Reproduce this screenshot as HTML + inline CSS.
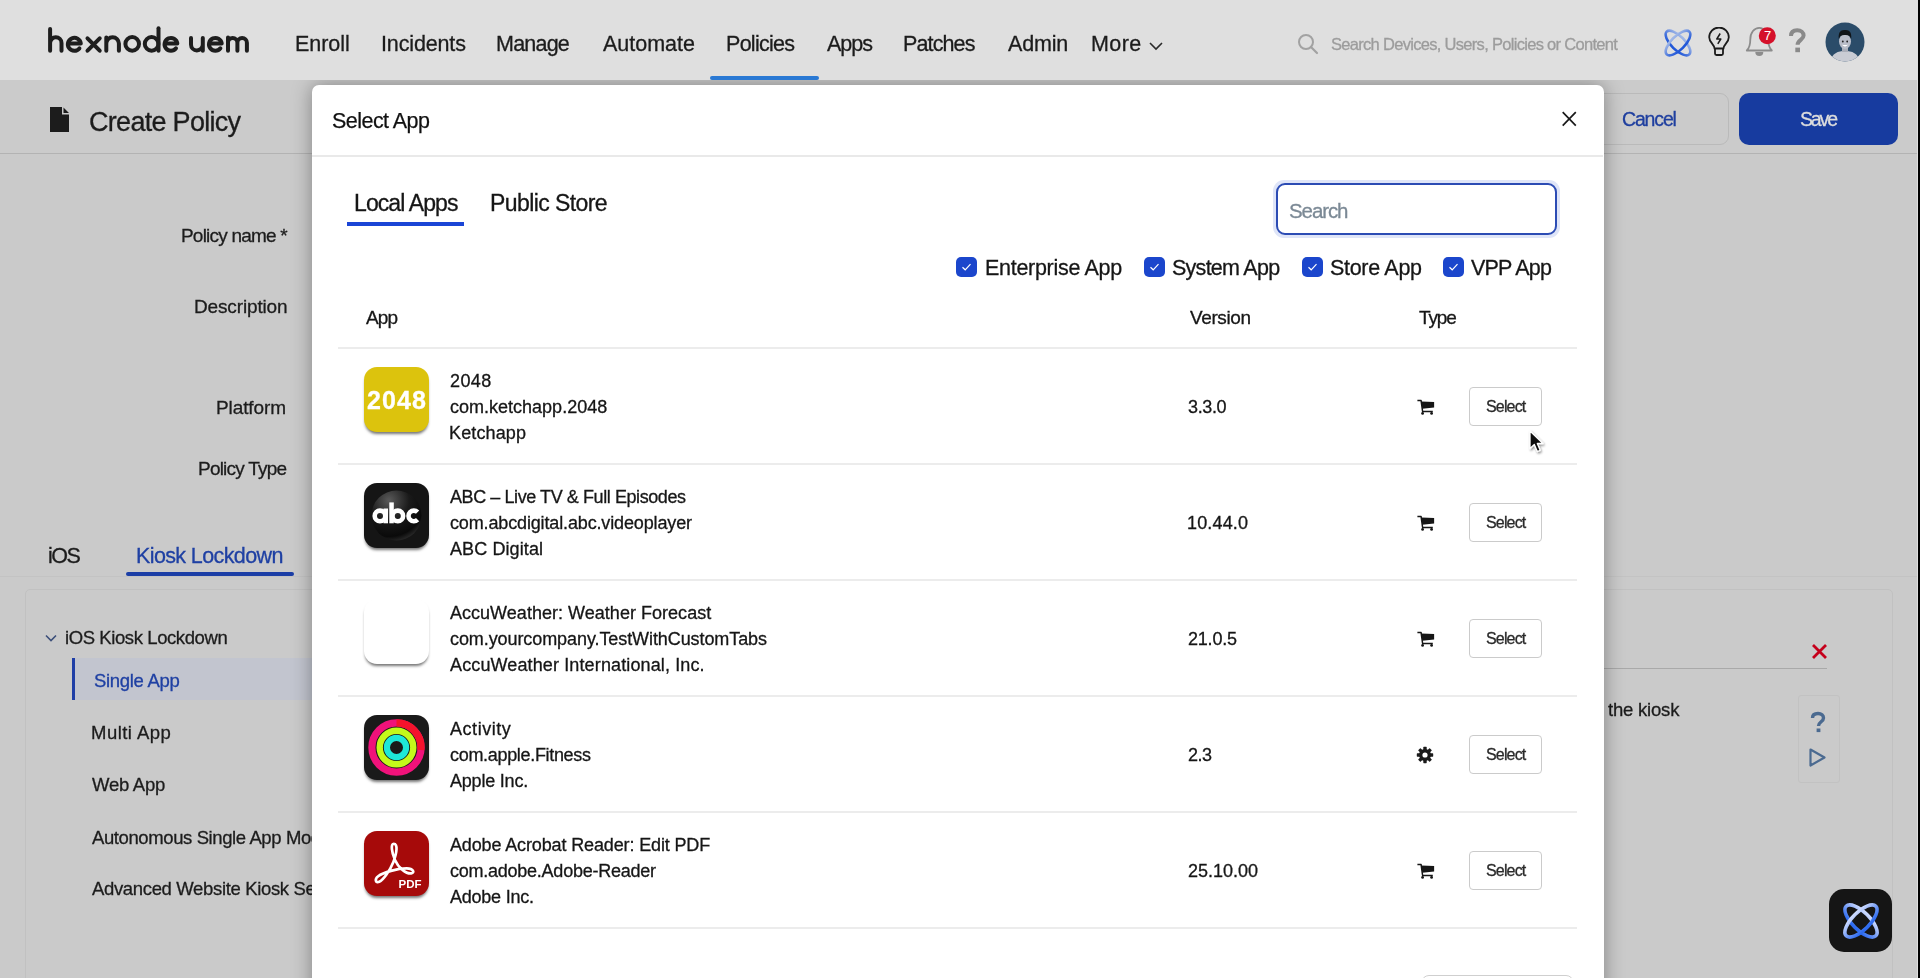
<!DOCTYPE html>
<html><head><meta charset="utf-8"><style>
*{box-sizing:border-box}
html,body{margin:0;padding:0;width:1920px;height:978px;overflow:hidden;background:#cacaca;font-family:"Liberation Sans",sans-serif;color:#1c1c1c}
.a{position:absolute}
.t{position:absolute;white-space:nowrap;line-height:1;will-change:transform;-webkit-text-stroke-width:0.3px}
#hdr{left:0;top:0;width:1920px;height:80px;background:#dfdfdf}
#hshadow{left:0;top:80px;width:1920px;height:6px;background:linear-gradient(#b4b4b4,#cacaca)}
#bar{left:0;top:80px;width:1920px;height:74px;background:#cbcbcb;border-bottom:1px solid #b3b3b3}
.nav{font-size:21.5px;color:#1c1c1c}
.lbl{font-size:19px;color:#1c1c1c}
.side{font-size:18.5px;color:#1c1c1c}
#modal{left:312px;top:5px;width:1292px;height:1000px;background:#fff;border-radius:7px;box-shadow:0 0 20px rgba(0,0,0,.36)}
.m{color:#161616}
.row{font-size:18px;color:#161616}
.hline{position:absolute;left:338px;width:1239px;height:2px;background:#ececec}
.cb{position:absolute;top:257px;width:21px;height:20px;border-radius:5px;background:#1b46cc}
.cb svg{position:absolute;left:5px;top:5px}
.sel{position:absolute;left:1469px;width:73px;height:39px;border:1px solid #cbcbcb;border-radius:4px;background:#fff}
.seltx{font-size:16px;color:#2a2a2a}
.icon{position:absolute;left:364px;width:65px;height:65px;border-radius:13px;overflow:hidden;box-shadow:0 3px 3px -1px rgba(0,0,0,.55)}
</style></head><body>
<!-- header -->
<div class="a" id="hdr"></div>
<div class="a" id="bar"></div>


<!-- logo -->
<svg class="a" style="left:0;top:0" width="260" height="80" viewBox="0 0 260 80">
<g fill="none" stroke="#1e1e1e" stroke-width="4" stroke-linecap="round" stroke-linejoin="round">
<path d="M50.1 28.9 V50.7 M50.1 43 A5.7 5.7 0 0 1 61.5 43 V50.7"></path>
<path d="M68.2 43.4 H80.8 A6.5 6.5 0 1 0 79.4 48.4"></path>
<path d="M87.5 38.3 L99.7 50.7 M99.7 38.3 L87.5 50.7"></path>
<path d="M106.3 37.5 V50.7 M106.3 43.6 A6.3 6.3 0 0 1 118.9 43.6 V50.7"></path>
<circle cx="132.2" cy="43.9" r="6.8"></circle>
<path d="M158.5 28.3 V50.7"></path><circle cx="151.6" cy="43.9" r="6.8"></circle>
<path d="M164.9 43.4 H177.3 A6.4 6.4 0 1 0 176 48.3"></path>
<path d="M191 38 V44.5 A5.9 5.9 0 0 0 202.8 44.5 V38 M202.8 44.5 V50.7"></path>
<path d="M209.3 43.4 H221.7 A6.4 6.4 0 1 0 220.4 48.3"></path>
<path d="M228 37.5 V50.7 M228 42.7 A4.7 4.7 0 0 1 237.4 42.7 V50.7 M237.4 42.7 A4.7 4.7 0 0 1 246.9 42.7 V50.7"></path>
</g></svg>

<!-- nav -->
<span class="t nav" style="left: 295.4px; top: 33.8px; letter-spacing: -0.034px;">Enroll</span>
<span class="t nav" style="left: 381.1px; top: 33.8px; letter-spacing: -0.145px;">Incidents</span>
<span class="t nav" style="left: 496.4px; top: 33.8px; letter-spacing: -0.781px;">Manage</span>
<span class="t nav" style="left: 602.5px; top: 33.8px; letter-spacing: -0.004px;">Automate</span>
<span class="t nav" style="left: 726.1px; top: 33.8px; letter-spacing: -0.713px;">Policies</span>
<span class="t nav" style="left: 827.1px; top: 33.8px; letter-spacing: -1.039px;">Apps</span>
<span class="t nav" style="left: 903.4px; top: 33.8px; letter-spacing: -0.881px;">Patches</span>
<span class="t nav" style="left: 1007.5px; top: 33.8px; letter-spacing: -0.163px;">Admin</span>
<span class="t nav" style="left: 1091.4px; top: 33.8px; letter-spacing: 0.439px;">More</span>
<svg class="a" style="left:1148px;top:41px" width="16" height="10" viewBox="0 0 16 10"><path d="M2 2 L8 8 L14 2" fill="none" stroke="#2a2a2a" stroke-width="1.6"></path></svg>
<div class="a" style="left:710px;top:76px;width:109px;height:4px;border-radius:2px;background:#2a79d4"></div>

<!-- header search -->
<svg class="a" style="left:1296px;top:33px" width="24" height="22" viewBox="0 0 24 22"><circle cx="10" cy="9" r="7" fill="none" stroke="#a2a2a2" stroke-width="2"></circle><path d="M15 14 L21 20" stroke="#a2a2a2" stroke-width="2.2" stroke-linecap="round"></path></svg>
<span class="t" style="left: 1330.5px; font-size: 16.5px; color: rgb(156, 156, 156); top: 36.4px; letter-spacing: -0.697px;">Search Devices, Users, Policies or Content</span>

<!-- header icons -->
<svg class="a" style="left:1662px;top:27px" width="32" height="32" viewBox="0 0 32 32">
<defs><linearGradient id="ag" x1="0" y1="0" x2="0" y2="1"><stop offset="0" stop-color="#9fb6e6"></stop><stop offset="1" stop-color="#1f56d8"></stop></linearGradient></defs>
<g fill="none" stroke="url(#ag)" stroke-width="2.6"><ellipse cx="16" cy="16" rx="16" ry="6.8" transform="rotate(45 16 16)"></ellipse><ellipse cx="16" cy="16" rx="16" ry="6.8" transform="rotate(-45 16 16)"></ellipse></g></svg>
<svg class="a" style="left:1706px;top:27px" width="26" height="30" viewBox="0 0 26 30">
<path d="M8.5 21.5 C8.5 17.5 3.2 15.5 3.2 10.3 A9.8 9.8 0 0 1 22.8 10.3 C22.8 15.5 17.5 17.5 17.5 21.5 Z" fill="none" stroke="#1b1b1b" stroke-width="1.8" stroke-linejoin="round"></path>
<path d="M9 22 V26.5 Q9 28 10.5 28 H15.5 Q17 28 17 26.5 V22" fill="none" stroke="#1b1b1b" stroke-width="1.8"></path>
<path d="M14.2 6.5 L10.8 12 H14.8 L11.8 16.8" fill="none" stroke="#1b1b1b" stroke-width="1.5" stroke-linejoin="round"></path></svg>
<svg class="a" style="left:1744px;top:24px" width="34" height="34" viewBox="0 0 34 34">
<path d="M2.8 26.5 H27.8 C24.8 23.5 24.3 21 24.3 15.5 C24.3 8.5 20.3 3.8 15.3 3.8 C10.3 3.8 6.3 8.5 6.3 15.5 C6.3 21 5.8 23.5 2.8 26.5 Z" fill="none" stroke="#8c8c8c" stroke-width="1.8" stroke-linejoin="round"></path>
<path d="M11.3 28 A4 4 0 0 0 19.3 28 Z" fill="#8c8c8c"></path>
<circle cx="23.3" cy="11.7" r="8.5" fill="#d5102a"></circle>
<text x="23.5" y="16.4" font-family="Liberation Sans" font-size="13" fill="#fff" text-anchor="middle">7</text></svg>
<svg class="a" style="left:1786px;top:27px" width="22" height="28" viewBox="0 0 22 28">
<path d="M5 9 C5 4.8 7.8 3.2 11.2 3.2 C15 3.2 17.6 5.4 17.6 8.6 C17.6 12.8 11.6 13 11.6 17.8" fill="none" stroke="#8a8a8a" stroke-width="4" stroke-linecap="butt"></path>
<rect x="9.3" y="20.6" width="4.7" height="4.6" fill="#8a8a8a"></rect></svg>
<svg class="a" style="left:1824px;top:22px" width="42" height="40" viewBox="0 0 42 40">
<defs><clipPath id="av"><circle cx="21" cy="20" r="19.5"></circle></clipPath></defs>
<g clip-path="url(#av)">
<rect x="0" y="0" width="42" height="40" fill="#2b4c69"></rect>
<path d="M6 40 C8 31 14 29 21 29 C28 29 34 31 36 40 Z" fill="#c9ccd4"></path>
<rect x="18" y="24" width="6" height="6" fill="#a9adb8"></rect>
<ellipse cx="21" cy="19.5" rx="6" ry="7.5" fill="#b9bdc8"></ellipse>
<path d="M14.8 17 C14 10 17 7.5 21 8 C25 7.5 28 10 27.2 17 C26 13.5 24 12.8 21 13 C18 12.8 16 13.5 14.8 17 Z" fill="#101418"></path>
<circle cx="18.8" cy="19.5" r="0.9" fill="#222"></circle><circle cx="23.2" cy="19.5" r="0.9" fill="#222"></circle>
<path d="M18.5 23 Q21 25.5 23.5 23" fill="#fff" stroke="#fff" stroke-width="0.6"></path>
</g></svg>

<!-- create policy bar -->
<svg class="a" style="left:49px;top:106px" width="22" height="27" viewBox="0 0 22 27"><path d="M1 1 H13 V8.5 H20 V26 H1 Z M14.5 1.5 L20 7 H14.5 Z" fill="#1c1c1c"></path></svg>
<span class="t" style="left: 88.5px; font-size: 27px; top: 109px; letter-spacing: -0.707px;">Create Policy</span>
<div class="a" style="left:1560px;top:93px;width:169px;height:52px;border:1px solid #bababa;border-radius:9px"></div>
<span class="t" style="left: 1622.1px; font-size: 19.5px; color: rgb(31, 63, 159); top: 110.3px; letter-spacing: -1.161px;">Cancel</span>
<div class="a" style="left:1739px;top:93px;width:159px;height:52px;border-radius:10px;background:#173b9f"></div>
<span class="t" style="left: 1799.5px; font-size: 19.5px; color: rgb(221, 221, 221); top: 110.4px; letter-spacing: -2.151px;">Save</span>

<!-- form labels -->
<span class="t lbl" style="left: 180.6px; top: 225.7px; letter-spacing: -0.798px;">Policy name *</span>
<span class="t lbl" style="left: 193.6px; top: 297.4px; letter-spacing: -0.145px;">Description</span>
<span class="t lbl" style="left: 216.4px; top: 397.7px; letter-spacing: -0.093px;">Platform</span>
<span class="t lbl" style="left: 197.5px; top: 458.9px; letter-spacing: -0.781px;">Policy Type</span>

<!-- tabs -->
<div class="a" style="left:0;top:576px;width:1920px;height:1px;background:#c3c3c3"></div>
<span class="t" style="left: 48.2px; font-size: 21.5px; top: 545.6px; letter-spacing: -1.472px;">iOS</span>
<span class="t" style="left: 136.4px; font-size: 21.5px; color: rgb(31, 64, 163); top: 545.6px; letter-spacing: -0.613px;">Kiosk Lockdown</span>
<div class="a" style="left:126px;top:572px;width:168px;height:4px;border-radius:2px;background:#1b3ea6"></div>

<!-- panel -->
<div class="a" style="left:25px;top:589px;width:1868px;height:420px;border:1px solid #c1c1c1;border-radius:5px"></div>
<svg class="a" style="left:44px;top:633px" width="14" height="10" viewBox="0 0 14 10"><path d="M2 2.5 L7 7.5 L12 2.5" fill="none" stroke="#3c4f7a" stroke-width="1.6"></path></svg>
<span class="t side" style="left: 64.8px; top: 629.3px; letter-spacing: -0.41px;">iOS Kiosk Lockdown</span>
<div class="a" style="left:72px;top:658px;width:260px;height:42px;background:#c2c5cf;border-left:3px solid #1f3ea6"></div>
<span class="t side" style="left: 94px; color: rgb(31, 64, 163); top: 671.7px; letter-spacing: -0.308px;">Single App</span>
<span class="t side" style="left: 90.7px; top: 723.9px; letter-spacing: 0.474px;">Multi App</span>
<span class="t side" style="left: 91.7px; top: 776.2px; letter-spacing: -0.242px;">Web App</span>
<span class="t side" style="left: 91.7px; top: 828.5px; letter-spacing: -0.396px;">Autonomous Single App Mode</span>
<span class="t side" style="left: 91.7px; top: 880.4px; letter-spacing: -0.343px;">Advanced Website Kiosk Settings</span>

<div class="a" style="left:1600px;top:668px;width:227px;height:1px;background:#a9a9a9"></div>
<svg class="a" style="left:1810px;top:642px" width="19" height="19" viewBox="0 0 19 19"><path d="M3 3 L16 16 M16 3 L3 16" stroke="#c5001b" stroke-width="2.8"></path></svg>
<span class="t side" style="left: 1607.9px; top: 700.5px; letter-spacing: -0.202px;">the kiosk</span>
<div class="a" style="left:1798px;top:695px;width:42px;height:88px;border:1px solid #c2c2c2;border-radius:3px"></div>
<svg class="a" style="left:1808px;top:711px" width="20" height="24" viewBox="0 0 20 24"><path d="M4.5 7 C4.5 4 6.8 2.5 10 2.5 C13.5 2.5 15.5 4.5 15.5 7 C15.5 10.8 10.5 10.8 10.5 15" fill="none" stroke="#4b6a90" stroke-width="3.4"></path><rect x="8.6" y="17.5" width="3.8" height="3.6" fill="#4b6a90"></rect></svg>
<svg class="a" style="left:1808px;top:747px" width="20" height="21" viewBox="0 0 20 21"><path d="M2.5 2.5 L16.5 10.5 L2.5 18.5 Z" fill="none" stroke="#4b6a90" stroke-width="2.2" stroke-linejoin="round"></path></svg>

<!-- chat bubble -->
<div class="a" style="left:1829px;top:889px;width:63px;height:63px;border-radius:15px;background:#151515"></div>
<svg class="a" style="left:1840px;top:900px" width="42" height="42" viewBox="0 0 42 42">
<defs><linearGradient id="ag2" x1="0" y1="0" x2="0" y2="1"><stop offset="0" stop-color="#c9d8ff"></stop><stop offset="1" stop-color="#2c6af0"></stop></linearGradient></defs>
<g fill="none" stroke="url(#ag2)" stroke-width="3.6"><ellipse cx="21" cy="21" rx="21" ry="8.8" transform="rotate(45 21 21)"></ellipse><ellipse cx="21" cy="21" rx="21" ry="8.8" transform="rotate(-45 21 21)"></ellipse></g></svg>

<!-- right edge -->
<div class="a" style="left:1917px;top:80px;width:1px;height:898px;background:#dedede"></div>
<div class="a" style="left:1918px;top:0;width:2px;height:978px;background:#000"></div>

<!-- MODAL -->
<div class="a" style="left:0;top:80px;width:1920px;height:898px;overflow:hidden"><div class="a" id="modal"></div></div>
<span class="t m" style="left: 332px; font-size: 21.5px; -webkit-text-stroke: 0.25px rgb(17, 17, 17); color: rgb(17, 17, 17); top: 110.8px; letter-spacing: -0.533px;">Select App</span>
<svg class="a" style="left:1561px;top:111px" width="16" height="16" viewBox="0 0 16 16"><path d="M1.7 1.2 L14.8 14.6 M14.8 1.2 L1.7 14.6" stroke="#1a1a1a" stroke-width="1.7"></path></svg>
<div class="a" style="left:312px;top:155px;width:1291px;height:2px;background:#e9e9e9"></div>

<span class="t m" style="left: 353.8px; font-size: 23px; top: 191.9px; letter-spacing: -0.903px;">Local Apps</span>
<span class="t m" style="left: 489.6px; font-size: 23px; top: 191.9px; letter-spacing: -0.592px;">Public Store</span>
<div class="a" style="left:347px;top:222px;width:117px;height:4px;background:#1a45d6"></div>

<div class="a" style="left:1273px;top:180px;width:287px;height:58px;border-radius:11px;background:#dfe5f8"></div>
<div class="a" style="left:1276px;top:183px;width:281px;height:52px;border:2px solid #2c4cb4;border-radius:9px;background:#fff"></div>
<span class="t" style="left: 1289.4px; font-size: 20.5px; color: rgb(123, 137, 149); top: 200.6px; letter-spacing: -1.094px;">Search</span>

<div class="cb" style="left:956px"><svg width="11" height="10" viewBox="0 0 11 10"><path d="M1.5 5.2 L4.2 7.8 L9.5 2.2" fill="none" stroke="#fff" stroke-width="1.2"></path></svg></div>
<span class="t m" style="left: 984.8px; font-size: 21.5px; top: 257.8px; letter-spacing: -0.295px;">Enterprise App</span>
<div class="cb" style="left:1144px"><svg width="11" height="10" viewBox="0 0 11 10"><path d="M1.5 5.2 L4.2 7.8 L9.5 2.2" fill="none" stroke="#fff" stroke-width="1.2"></path></svg></div>
<span class="t m" style="left: 1171.5px; font-size: 21.5px; top: 257.8px; letter-spacing: -0.737px;">System App</span>
<div class="cb" style="left:1302px"><svg width="11" height="10" viewBox="0 0 11 10"><path d="M1.5 5.2 L4.2 7.8 L9.5 2.2" fill="none" stroke="#fff" stroke-width="1.2"></path></svg></div>
<span class="t m" style="left: 1330px; font-size: 21.5px; top: 257.8px; letter-spacing: -0.305px;">Store App</span>
<div class="cb" style="left:1443px"><svg width="11" height="10" viewBox="0 0 11 10"><path d="M1.5 5.2 L4.2 7.8 L9.5 2.2" fill="none" stroke="#fff" stroke-width="1.2"></path></svg></div>
<span class="t m" style="left: 1471px; font-size: 21.5px; top: 257.8px; letter-spacing: -0.781px;">VPP App</span>

<span class="t m" style="left: 366px; font-size: 19px; top: 308.1px; letter-spacing: -0.906px;">App</span>
<span class="t m" style="left: 1190.1px; font-size: 19px; top: 308.1px; letter-spacing: -0.396px;">Version</span>
<span class="t m" style="left: 1419.1px; font-size: 19px; top: 308.1px; letter-spacing: -1.134px;">Type</span>
<div class="hline" style="top:347px"></div>

<!-- ROWS -->
<!--ROWS-->
<div class="icon" style="top:367px;background:#dcc30d"><span class="t" style="left:2.8px;top:20.6px;font-size:25px;font-weight:700;color:#fff;letter-spacing:1.1px">2048</span></div>
<span class="t row" style="left: 449.8px; top: 372.4px; letter-spacing: 0.418px;">2048</span>
<span class="t row" style="left: 449.8px; top: 398.4px; letter-spacing: 0.006px;">com.ketchapp.2048</span>
<span class="t row" style="left: 448.8px; top: 424.4px; letter-spacing: 0.134px;">Ketchapp</span>
<span class="t row" style="left: 1187.9px; top: 398.3px; letter-spacing: -0.362px;">3.3.0</span>
<svg class="a" style="left:1417px;top:399px" width="18" height="16" viewBox="0 0 18 16"><path d="M0.4 1.6 H4.1 L5.6 12.5 H15.8" fill="none" stroke="#161616" stroke-width="1.5" stroke-linejoin="round"></path><path d="M4.4 2.4 L17.1 2.9 V8.6 L5.3 9.8 Z" fill="#161616"></path><circle cx="5.6" cy="14.4" r="1.4" fill="#161616"></circle><circle cx="14.6" cy="14.4" r="1.4" fill="#161616"></circle></svg>
<div class="sel" style="top:387px"></div>
<span class="t seltx" style="left: 1485.6px; top: 399.2px; letter-spacing: -0.834px;">Select</span>
<div class="hline" style="top:463px"></div>
<div class="icon" style="top:483px;background:#151515"><svg width="65" height="65" viewBox="0 0 65 65"><defs><radialGradient id="abg" cx="0.35" cy="0.2" r="0.9"><stop offset="0" stop-color="#5a5a5a"></stop><stop offset="0.45" stop-color="#1a1a1a"></stop><stop offset="0.8" stop-color="#0a0a0a"></stop><stop offset="1" stop-color="#3a3a3a"></stop></radialGradient></defs><circle cx="32.5" cy="32.5" r="25" fill="url(#abg)"></circle><g fill="none" stroke="#fff" stroke-width="4.6"><circle cx="16" cy="32.9" r="5.3"></circle><circle cx="33.8" cy="32.9" r="5.3"></circle><path d="M53.6 29.2 A5.3 5.3 0 1 0 53.6 36.6"></path></g><rect x="19.5" y="25.5" width="4.5" height="14.8" fill="#fff"></rect><rect x="25.3" y="19.4" width="4.5" height="20.9" fill="#fff"></rect></svg></div>
<span class="t row" style="left: 449.8px; top: 488.4px; letter-spacing: -0.421px;">ABC – Live TV &amp; Full Episodes</span>
<span class="t row" style="left: 449.8px; top: 514.4px; letter-spacing: -0.143px;">com.abcdigital.abc.videoplayer</span>
<span class="t row" style="left: 449.8px; top: 540.4px; letter-spacing: 0.097px;">ABC Digital</span>
<span class="t row" style="left: 1186.9px; top: 514.3px; letter-spacing: 0.156px;">10.44.0</span>
<svg class="a" style="left:1417px;top:515px" width="18" height="16" viewBox="0 0 18 16"><path d="M0.4 1.6 H4.1 L5.6 12.5 H15.8" fill="none" stroke="#161616" stroke-width="1.5" stroke-linejoin="round"></path><path d="M4.4 2.4 L17.1 2.9 V8.6 L5.3 9.8 Z" fill="#161616"></path><circle cx="5.6" cy="14.4" r="1.4" fill="#161616"></circle><circle cx="14.6" cy="14.4" r="1.4" fill="#161616"></circle></svg>
<div class="sel" style="top:503px"></div>
<span class="t seltx" style="left: 1485.6px; top: 515.2px; letter-spacing: -0.834px;">Select</span>
<div class="hline" style="top:579px"></div>
<div class="icon" style="top:599px;background:#fff"></div>
<span class="t row" style="left: 449.8px; top: 604.4px; letter-spacing: 0.027px;">AccuWeather: Weather Forecast</span>
<span class="t row" style="left: 449.8px; top: 630.4px; letter-spacing: -0.084px;">com.yourcompany.TestWithCustomTabs</span>
<span class="t row" style="left: 449.8px; top: 656.4px; letter-spacing: 0.126px;">AccuWeather International, Inc.</span>
<span class="t row" style="left: 1187.9px; top: 630.3px; letter-spacing: -0.209px;">21.0.5</span>
<svg class="a" style="left:1417px;top:631px" width="18" height="16" viewBox="0 0 18 16"><path d="M0.4 1.6 H4.1 L5.6 12.5 H15.8" fill="none" stroke="#161616" stroke-width="1.5" stroke-linejoin="round"></path><path d="M4.4 2.4 L17.1 2.9 V8.6 L5.3 9.8 Z" fill="#161616"></path><circle cx="5.6" cy="14.4" r="1.4" fill="#161616"></circle><circle cx="14.6" cy="14.4" r="1.4" fill="#161616"></circle></svg>
<div class="sel" style="top:619px"></div>
<span class="t seltx" style="left: 1485.6px; top: 631.2px; letter-spacing: -0.834px;">Select</span>
<div class="hline" style="top:695px"></div>
<div class="icon" style="top:715px;background:#1a1a1a"><svg width="65" height="65" viewBox="0 0 65 65"><circle cx="32.5" cy="32.5" r="24.6" fill="none" stroke="#f0127a" stroke-width="7.2"></circle><path d="M32.5 7.9 A24.6 24.6 0 0 1 56.9 35" fill="none" stroke="#f5132c" stroke-width="7.2"></path><circle cx="32.5" cy="32.5" r="16.8" fill="none" stroke="#c4f91a" stroke-width="6.4"></circle><circle cx="32.5" cy="32.5" r="9.6" fill="none" stroke="#1ee8d8" stroke-width="6.2"></circle></svg></div>
<span class="t row" style="left: 449.8px; top: 720.4px; letter-spacing: 0.541px;">Activity</span>
<span class="t row" style="left: 449.8px; top: 746.4px; letter-spacing: -0.317px;">com.apple.Fitness</span>
<span class="t row" style="left: 449.8px; top: 772.4px; letter-spacing: -0.207px;">Apple Inc.</span>
<span class="t row" style="left: 1187.9px; top: 746.3px; letter-spacing: -0.516px;">2.3</span>
<svg class="a" style="left:1416px;top:746px" width="18" height="18" viewBox="0 0 18 18"><g fill="#1a1a1a"><circle cx="9" cy="9" r="6"></circle><rect x="7.3" y="0.8" width="3.4" height="16.4" rx="0.6"></rect><rect x="7.3" y="0.8" width="3.4" height="16.4" rx="0.6" transform="rotate(45 9 9)"></rect><rect x="7.3" y="0.8" width="3.4" height="16.4" rx="0.6" transform="rotate(90 9 9)"></rect><rect x="7.3" y="0.8" width="3.4" height="16.4" rx="0.6" transform="rotate(135 9 9)"></rect></g><circle cx="9" cy="9" r="2.6" fill="#fff"></circle></svg>
<div class="sel" style="top:735px"></div>
<span class="t seltx" style="left: 1485.6px; top: 747.2px; letter-spacing: -0.834px;">Select</span>
<div class="hline" style="top:811px"></div>
<div class="icon" style="top:831px;background:#a60a0a"><svg width="65" height="65" viewBox="0 0 65 65"><g transform="translate(-3.2 -3.5) scale(1.12)"><path d="M29.5 14.5 C33 14.5 32.5 22 29 31 C26 38.5 20 47 16.5 48.5 C13 50 12.2 46 15.5 43.5 C20 40 33 36.5 41 36.5 C47 36.5 48.5 40.5 45 41 C40.5 41.5 33.5 36 30.5 29 C27.5 22 26.5 14.5 29.5 14.5 Z" fill="none" stroke="#fff" stroke-width="2.4" stroke-linejoin="round"></path></g><text x="46" y="57" font-family="Liberation Sans" font-weight="700" font-size="11.5" fill="#fff" text-anchor="middle">PDF</text></svg></div>
<span class="t row" style="left: 449.8px; top: 836.4px; letter-spacing: -0.136px;">Adobe Acrobat Reader: Edit PDF</span>
<span class="t row" style="left: 449.8px; top: 862.4px; letter-spacing: -0.245px;">com.adobe.Adobe-Reader</span>
<span class="t row" style="left: 449.8px; top: 888.4px; letter-spacing: -0.229px;">Adobe Inc.</span>
<span class="t row" style="left: 1187.9px; top: 862.3px; letter-spacing: -0.011px;">25.10.00</span>
<svg class="a" style="left:1417px;top:863px" width="18" height="16" viewBox="0 0 18 16"><path d="M0.4 1.6 H4.1 L5.6 12.5 H15.8" fill="none" stroke="#161616" stroke-width="1.5" stroke-linejoin="round"></path><path d="M4.4 2.4 L17.1 2.9 V8.6 L5.3 9.8 Z" fill="#161616"></path><circle cx="5.6" cy="14.4" r="1.4" fill="#161616"></circle><circle cx="14.6" cy="14.4" r="1.4" fill="#161616"></circle></svg>
<div class="sel" style="top:851px"></div>
<span class="t seltx" style="left: 1485.6px; top: 863.2px; letter-spacing: -0.834px;">Select</span>
<div class="hline" style="top:927px"></div>
<div class="a" style="left:1421px;top:975px;width:153px;height:40px;border:1px solid #cfcfcf;border-radius:8px;background:#fff"></div>
<svg class="a" style="left:1526px;top:428px" width="24" height="28" viewBox="0 0 24 28"><defs><filter id="cs" x="-50%" y="-50%" width="200%" height="200%"><feDropShadow dx="1" dy="1.5" stdDeviation="1" flood-opacity="0.45"></feDropShadow></filter></defs><path d="M4 3 V20.5 L8.3 16.5 L11.3 23.5 L14.2 22.3 L11.3 15.5 H17 Z" fill="#111" stroke="#fff" stroke-width="1.3" stroke-linejoin="round" filter="url(#cs)"></path></svg>
<!--/ROWS-->


</body></html>
